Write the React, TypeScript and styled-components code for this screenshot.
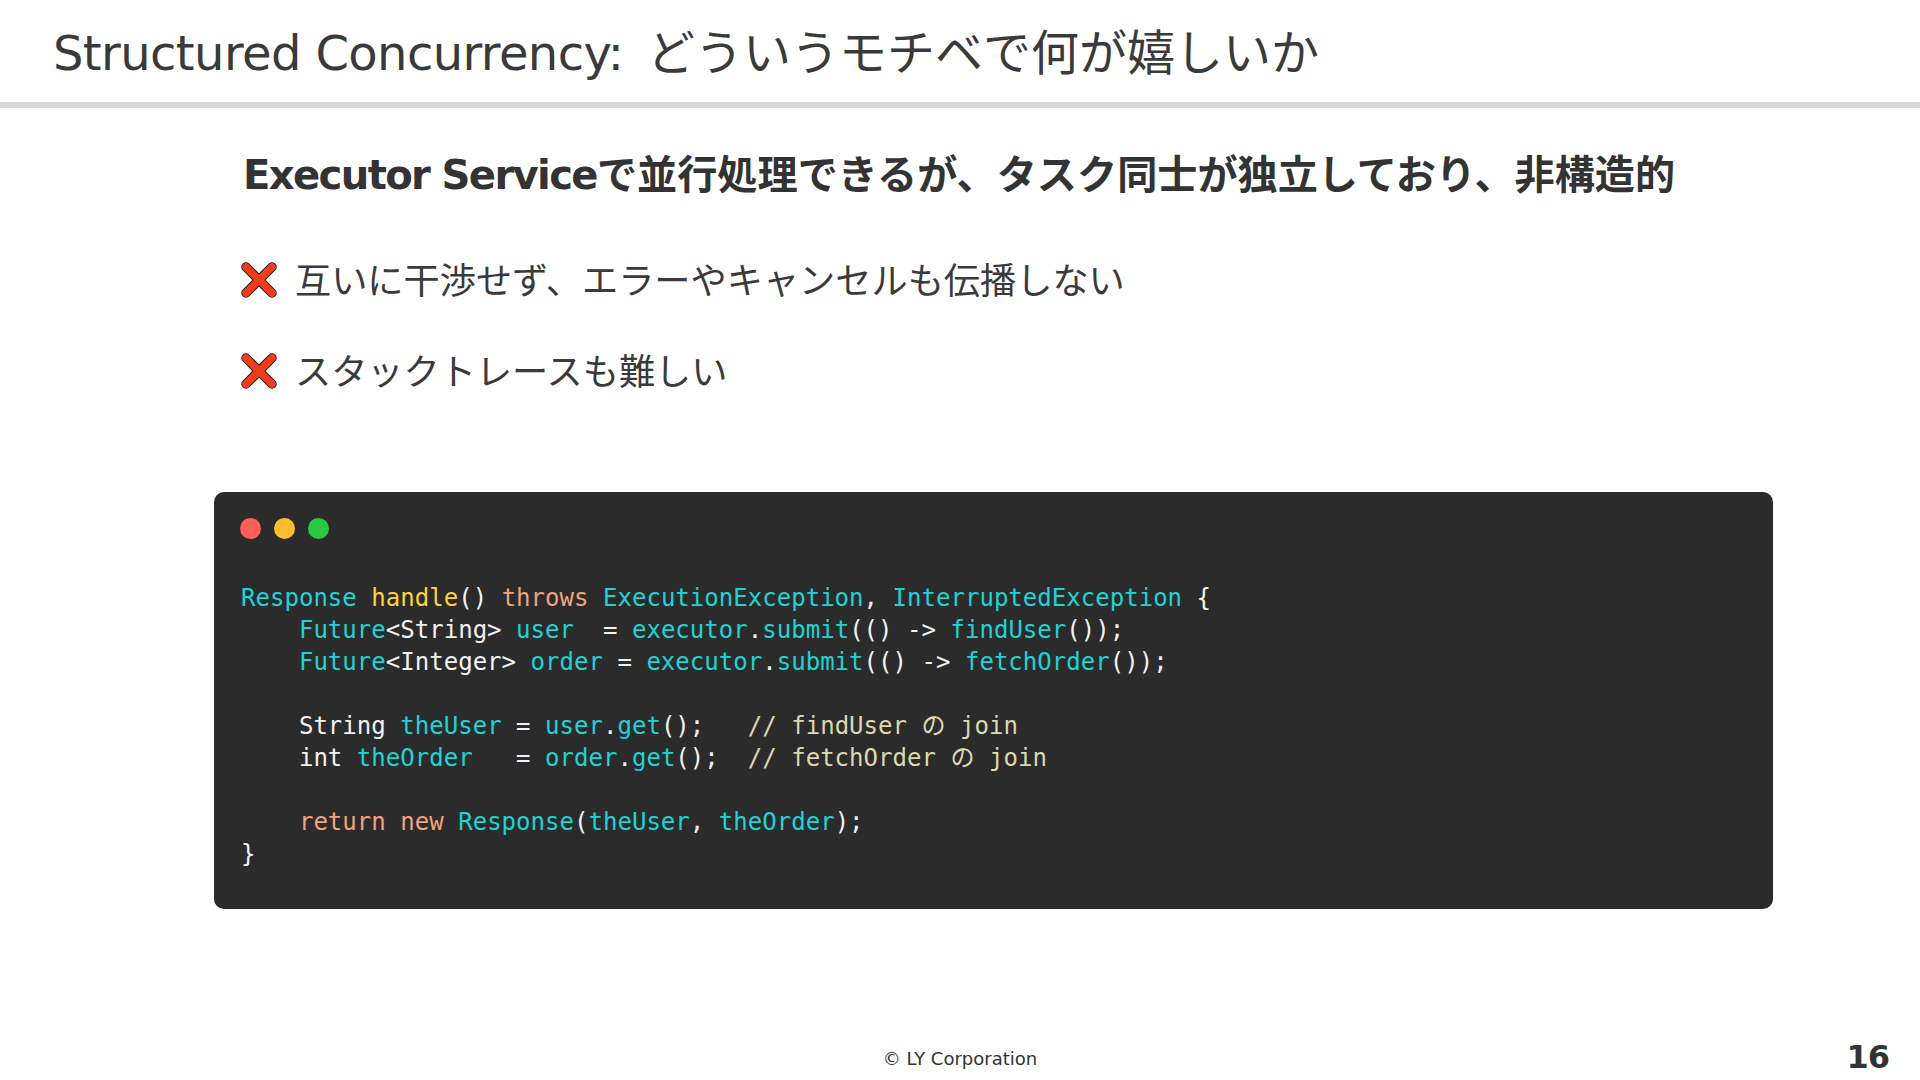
import React from "react";
import styled, { createGlobalStyle } from "styled-components";

const GlobalStyle = createGlobalStyle`
  html, body {
    margin: 0;
    padding: 0;
    background: #ffffff;
  }
`;

const sans = `"DejaVu Sans", "Noto Sans CJK JP", sans-serif`;

type Tone = "type" | "call" | "key" | "plain" | "note";

const toneColors: Record<Tone, string> = {
  type: "#1dd3d6",
  call: "#ffd23c",
  key: "#f2a27c",
  plain: "#f2f2f2",
  note: "#dcd8b0",
};

type Token = [Tone, string];

const codeLines: Token[][] = [
  [["type", "Response "], ["call", "handle"], ["plain", "() "], ["key", "throws "], ["type", "ExecutionException"], ["plain", ", "], ["type", "InterruptedException "], ["plain", "{"]],
  [["type", "    Future"], ["plain", "<String> "], ["type", "user"], ["plain", "  = "], ["type", "executor"], ["plain", "."], ["type", "submit"], ["plain", "(() -> "], ["type", "findUser"], ["plain", "());"]],
  [["type", "    Future"], ["plain", "<Integer> "], ["type", "order"], ["plain", " = "], ["type", "executor"], ["plain", "."], ["type", "submit"], ["plain", "(() -> "], ["type", "fetchOrder"], ["plain", "());"]],
  [],
  [["plain", "    String "], ["type", "theUser"], ["plain", " = "], ["type", "user"], ["plain", "."], ["type", "get"], ["plain", "();   "], ["note", "// findUser の join"]],
  [["plain", "    int "], ["type", "theOrder"], ["plain", "   = "], ["type", "order"], ["plain", "."], ["type", "get"], ["plain", "();  "], ["note", "// fetchOrder の join"]],
  [],
  [["key", "    return new "], ["type", "Response"], ["plain", "("], ["type", "theUser"], ["plain", ", "], ["type", "theOrder"], ["plain", ");"]],
  [["plain", "}"]],
];

const Slide = styled.div`
  width: 1920px;
  height: 1080px;
  display: flex;
  flex-direction: column;
  overflow: hidden;
  background: #ffffff;
  color: #333333;
  font-family: ${sans};
`;

const Header = styled.header`
  height: 97px;
  display: flex;
  align-items: center;
  padding: 0 0 5px 53px;
  border-bottom: 6px solid #d9d9d9;
`;

const Title = styled.h1`
  margin: 0;
  font-size: 48px;
  font-weight: 400;
  white-space: nowrap;
  color: #3a3a3a;
`;

// the latin part of a heading runs narrower than DejaVu
const Latin = styled.span<{ $squeeze: number; $after?: number }>`
  letter-spacing: ${(p) => p.$squeeze}px;
  margin-right: ${(p) => p.$after ?? 0}px;
`;

const Main = styled.main`
  flex: 1;
  display: flex;
  flex-direction: column;
  padding: 43px 147px 0 214px;
`;

const Lead = styled.h2`
  margin: 0 0 0 29px;
  height: 48px;
  line-height: 48px;
  font-size: 40.15px;
  font-weight: 700;
  white-space: nowrap;
  color: #333333;
`;

const Points = styled.ul`
  list-style: none;
  margin: 54px 0 0 26px;
  padding: 0;
  display: flex;
  flex-direction: column;
  gap: 41px;
`;

const Point = styled.li`
  height: 50px;
  display: flex;
  align-items: center;
  gap: 17px;
  font-size: 36.2px;
  white-space: nowrap;
  color: #3a3a3a;
`;

const CrossSvg = styled.svg`
  flex: none;
  width: 38px;
  height: 38px;
  margin-top: 3px;
`;

const CodeCard = styled.section`
  margin-top: 98px;
  height: 417px;
  box-sizing: border-box;
  padding: 26px 26px 0;
  border-radius: 10px;
  background: #2b2b2b;
`;

const Dots = styled.div`
  display: flex;
  gap: 13px;
`;

const Dot = styled.span<{ $color: string }>`
  width: 21px;
  height: 21px;
  border-radius: 50%;
  background: ${(p) => p.$color};
`;

const Code = styled.pre`
  margin: 43px 0 0;
  padding-left: 1px;
  font-family: "DejaVu Sans Mono", "Noto Sans CJK JP", monospace;
  font-size: 24.05px;
  line-height: 32px;
`;

const CodeLine = styled.div`
  height: 32px;
  white-space: pre;
`;

const Tok = styled.span<{ $tone: Tone }>`
  color: ${(p) => toneColors[p.$tone]};
`;

const Footer = styled.footer`
  display: grid;
  grid-template-columns: 1fr auto 1fr;
  align-items: center;
  height: 44px;
  padding: 0 31px;
`;

const Copyright = styled.span`
  grid-column: 2;
  font-size: 18px;
  color: #333333;
`;

const PageNo = styled.span`
  grid-column: 3;
  justify-self: end;
  margin-bottom: 3px;
  font-size: 32px;
  font-weight: 700;
  letter-spacing: -1px;
  color: #333333;
`;

const CrossIcon = () => (
  <CrossSvg viewBox="0 0 38 38">
    <g fill="none" strokeLinecap="round">
      <path d="M6 6 L32 32 M32 6 L6 32" stroke="#1a1a1a" strokeWidth="9.5" />
      <path d="M6 6 L32 32 M32 6 L6 32" stroke="#ee3d1b" strokeWidth="7.5" />
    </g>
  </CrossSvg>
);

export default function App() {
  return (
    <>
      <GlobalStyle />
      <Slide>
        <Header>
          <Title>
            <Latin $squeeze={-0.6} $after={9}>Structured Concurrency: </Latin>
            どういうモチベで何が嬉しいか
          </Title>
        </Header>
        <Main>
          <Lead>
            <Latin $squeeze={-1.65}>Executor Service</Latin>
            で並行処理できるが、タスク同士が独立しており、非構造的
          </Lead>
          <Points>
            <Point>
              <CrossIcon />
              互いに干渉せず、エラーやキャンセルも伝播しない
            </Point>
            <Point>
              <CrossIcon />
              スタックトレースも難しい
            </Point>
          </Points>
          <CodeCard>
            <Dots>
              <Dot $color="#ff5f57" />
              <Dot $color="#febc2e" />
              <Dot $color="#28c840" />
            </Dots>
            <Code>
              {codeLines.map((line, i) => (
                <CodeLine key={i}>
                  {line.map(([tone, text], j) => (
                    <Tok key={j} $tone={tone}>
                      {text}
                    </Tok>
                  ))}
                </CodeLine>
              ))}
            </Code>
          </CodeCard>
        </Main>
        <Footer>
          <Copyright>© LY Corporation</Copyright>
          <PageNo>16</PageNo>
        </Footer>
      </Slide>
    </>
  );
}
